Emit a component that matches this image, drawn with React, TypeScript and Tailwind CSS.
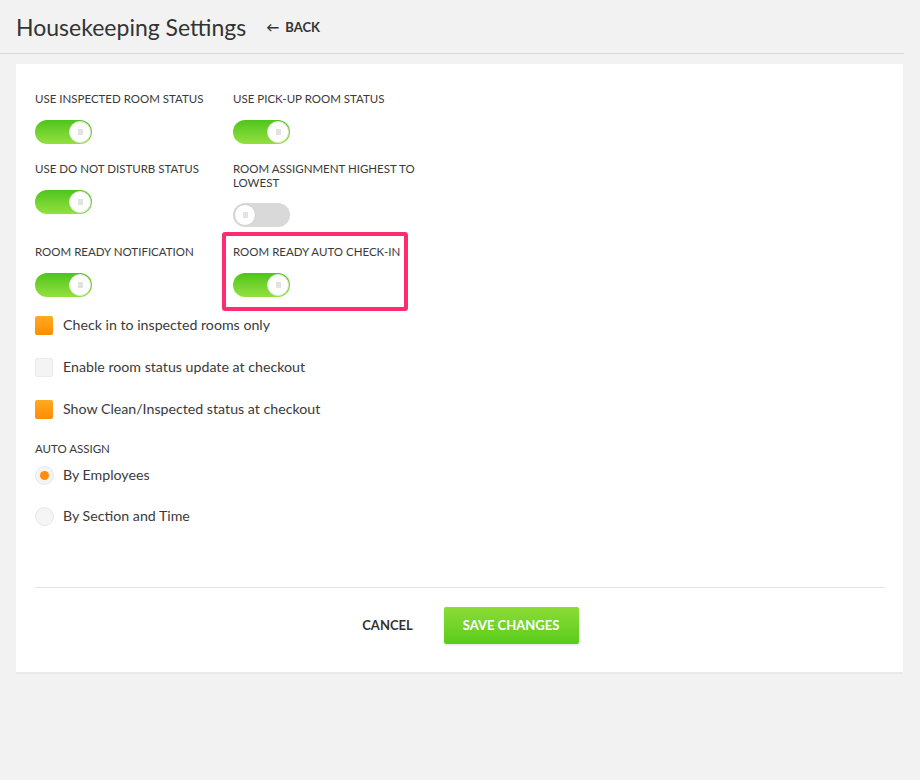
import { useState } from 'react';

const font = { fontFamily: 'Lato, "Open Sans", sans-serif' };

function Toggle({ on, onClick }: { on: boolean; onClick: () => void }) {
  return (
    <button
      onClick={onClick}
      className={
        on
          ? 'relative block w-[57px] h-6 rounded-full bg-gradient-to-b from-[#4cc51a] to-[#93e03f]'
          : 'relative block w-[57px] h-6 rounded-full bg-[#d9d9d9]'
      }
    >
      <span
        className={
          on
            ? 'absolute top-px right-px w-[22px] h-[22px] rounded-full bg-white border border-[#e6e6e6] flex items-center justify-center'
            : 'absolute top-px left-px w-[22px] h-[22px] rounded-full bg-white border border-[#d0d0d0] flex items-center justify-center'
        }
      >
        <span className="w-[5px] h-[6px] bg-[#e2e2e2]" />
      </span>
    </button>
  );
}

function Checkbox({ checked, label, onClick }: { checked: boolean; label: string; onClick: () => void }) {
  return (
    <div className="flex items-center h-5 cursor-pointer" onClick={onClick}>
      <span
        className={
          checked
            ? 'w-[18px] h-[19px] rounded-[2px] bg-gradient-to-b from-[#ffab1f] to-[#ff8c00]'
            : 'w-[18px] h-[19px] rounded-[2px] bg-[#f4f4f4] border border-[#ececec]'
        }
      />
      <span className="ml-[10px] text-[14.2px] leading-5 text-[#3a3a3a]">{label}</span>
    </div>
  );
}

function Radio({ checked, label, onClick }: { checked: boolean; label: string; onClick: () => void }) {
  return (
    <div className="flex items-center h-5 cursor-pointer" onClick={onClick}>
      <span className="w-[19px] h-[19px] rounded-full bg-[#f5f5f5] border border-[#e8e8e8] flex items-center justify-center">
        {checked && <span className="w-[9px] h-[9px] rounded-full bg-[#ff8c0a]" />}
      </span>
      <span className="ml-[9px] text-[14.2px] leading-5 text-[#3a3a3a]">{label}</span>
    </div>
  );
}

export default function App() {
  const [toggles, setToggles] = useState({
    inspected: true,
    pickup: true,
    dnd: true,
    highest: false,
    notify: true,
    autoCheckIn: true,
  });
  const [checks, setChecks] = useState([true, false, true]);
  const [assign, setAssign] = useState('employees');

  const flip = (k: keyof typeof toggles) => setToggles({ ...toggles, [k]: !toggles[k] });
  const flipCheck = (i: number) => setChecks(checks.map((c, j) => (j === i ? !c : c)));

  const label = 'block text-[11.5px] leading-[14px] text-[#3a3a3a] uppercase';

  return (
    <div className="min-h-[780px] bg-[#f2f2f2]" style={font}>
      {/* Header */}
      <div className="w-[904px] h-[54px] border-b border-[#dadada] flex items-center pl-4">
        <h1 className="text-[23px] text-[#333] leading-none mt-[2px]">Housekeeping Settings</h1>
        <a className="ml-5 mt-[3px] flex items-center gap-[6px] text-[13px] font-bold text-[#333] cursor-pointer">
          <span className="text-[13px]">←</span>
          BACK
        </a>
      </div>

      {/* Card */}
      <div className="ml-4 mt-[10px] w-[887px] bg-white border-b-2 border-[#e9e9e9] pl-[19px] pr-[18px] pt-[28px] pb-[28px]">
        <div className="grid grid-cols-[198px_198px] gap-y-[18px]">
          <div>
            <span className={label}>Use inspected room status</span>
            <div className="mt-[14px]">
              <Toggle on={toggles.inspected} onClick={() => flip('inspected')} />
            </div>
          </div>
          <div>
            <span className={label}>Use pick-up room status</span>
            <div className="mt-[14px]">
              <Toggle on={toggles.pickup} onClick={() => flip('pickup')} />
            </div>
          </div>
          <div>
            <span className={label}>Use do not disturb status</span>
            <div className="mt-[14px]">
              <Toggle on={toggles.dnd} onClick={() => flip('dnd')} />
            </div>
          </div>
          <div>
            <span className={label}>Room assignment highest to lowest</span>
            <div className="mt-[13px]">
              <Toggle on={toggles.highest} onClick={() => flip('highest')} />
            </div>
          </div>
          <div>
            <span className={label}>Room ready notification</span>
            <div className="mt-[14px]">
              <Toggle on={toggles.notify} onClick={() => flip('notify')} />
            </div>
          </div>
          <div className="relative">
            {/* highlight annotation */}
            <div className="absolute -left-[11px] -top-[13px] w-[186px] h-[79px] border-4 border-[#ff2d6f] rounded-[3px] pointer-events-none" />
            <span className={label}>Room ready auto check-in</span>
            <div className="mt-[14px]">
              <Toggle on={toggles.autoCheckIn} onClick={() => flip('autoCheckIn')} />
            </div>
          </div>
        </div>

        <div className="mt-[18px] flex flex-col gap-[22px]">
          <Checkbox checked={checks[0]} label="Check in to inspected rooms only" onClick={() => flipCheck(0)} />
          <Checkbox checked={checks[1]} label="Enable room status update at checkout" onClick={() => flipCheck(1)} />
          <Checkbox checked={checks[2]} label="Show Clean/Inspected status at checkout" onClick={() => flipCheck(2)} />
        </div>

        <span className={label + ' mt-[23px]'}>Auto assign</span>
        <div className="mt-[9px] flex flex-col gap-[21px]">
          <Radio checked={assign === 'employees'} label="By Employees" onClick={() => setAssign('employees')} />
          <Radio checked={assign === 'section'} label="By Section and Time" onClick={() => setAssign('section')} />
        </div>

        <div className="mt-[61px] border-t border-[#e3e3e3]" />

        <div className="mt-[19px] flex justify-center">
          <button className="w-[92px] h-[37px] text-[13px] font-bold text-[#333] uppercase">Cancel</button>
          <button className="ml-[10px] w-[135px] h-[37px] rounded-[2px] bg-gradient-to-b from-[#8bdc35] to-[#58cc1a] text-[13px] font-bold text-white uppercase shadow-sm">
            Save changes
          </button>
        </div>
      </div>
    </div>
  );
}
